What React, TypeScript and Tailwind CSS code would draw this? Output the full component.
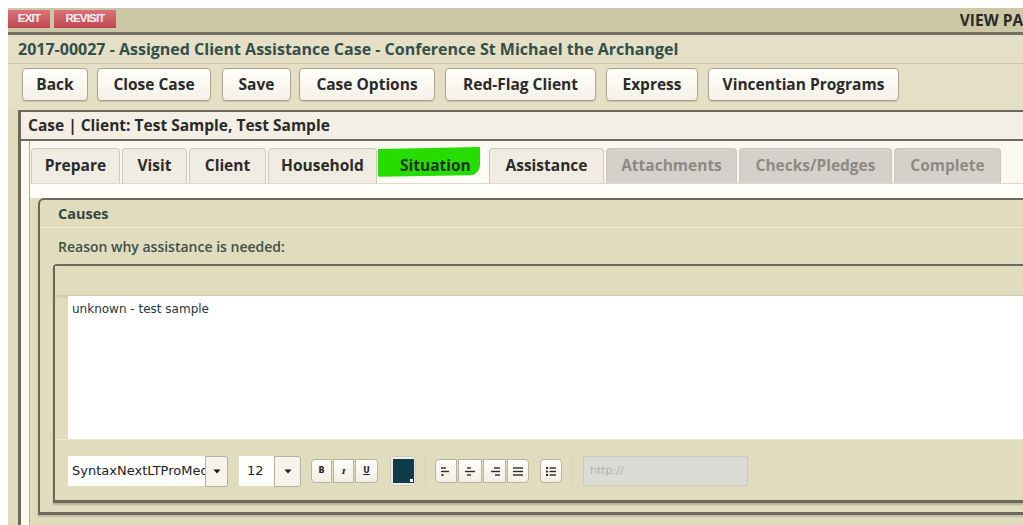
import React from "react";

const UI = "font-['Open_Sans',sans-serif]";

function ActionButton({ label, w }: { label: string; w: string }) {
  return (
    <div
      className={`${w} h-[33px] flex items-center justify-center rounded-[4px] border border-[#a9a48f] bg-gradient-to-b from-[#fffefb] to-[#f4f1e7] shadow-[0_1px_1px_rgba(0,0,0,0.15)] text-[15.5px] font-bold text-[#2a2a2a] shrink-0`}
    >
      {label}
    </div>
  );
}

function Tab({ label, w, state }: { label: string; w: string; state: "on" | "disabled" | "active" }) {
  if (state === "active") {
    return (
      <div className={`${w} h-[35px] relative shrink-0 bg-[#fffdf6]`}>
        <div className="absolute left-[-1px] top-[0px] w-[102px] h-[28px] bg-[#27dd00] rounded-br-[10px] rounded-bl-[2px] skew-y-[-1deg]" />
        <div className="relative h-full flex items-center pl-[21px] text-[15.5px] font-bold text-[#1e3416]">{label}</div>
      </div>
    );
  }
  const cls =
    state === "disabled"
      ? "bg-[#d4d1ca] border-[#c9c6bd] text-[#8d8a83]"
      : "bg-[#f0ece1] border-[#cfcabb] text-[#2b2b2b]";
  return (
    <div
      className={`${w} h-[35px] shrink-0 flex items-center justify-center rounded-t-[4px] border border-b-0 ${cls} text-[15.5px] font-bold`}
    >
      {label}
    </div>
  );
}

function Caret() {
  return (
    <svg width="8" height="5" viewBox="0 0 8 5">
      <path d="M0.5 0.5 L7.5 0.5 L4 4.5 Z" fill="#1a1a1a" />
    </svg>
  );
}

function SmallBtn({ children, w = "w-[21px]", cls = "" }: { children: React.ReactNode; w?: string; cls?: string }) {
  return (
    <div
      className={`${w} h-[24px] flex items-center justify-center bg-gradient-to-b from-[#fffefa] to-[#f1eee4] border border-[#b9b4a2] ${cls}`}
    >
      {children}
    </div>
  );
}

function Lines({ kind }: { kind: "left" | "center" | "right" | "justify" }) {
  const rows: [number, number][] =
    kind === "left"
      ? [[1, 6], [1, 9], [1, 4]]
      : kind === "center"
      ? [[3, 7], [1, 11], [3, 7]]
      : kind === "right"
      ? [[5, 11], [2, 11], [6, 11]]
      : [[1, 11], [1, 11], [1, 11]];
  return (
    <svg width="12" height="11" viewBox="0 0 12 11">
      {rows.map(([a, b], i) => (
        <line key={i} x1={a} x2={b} y1={2 + i * 3.5} y2={2 + i * 3.5} stroke="#2a2a2a" strokeWidth="1.4" />
      ))}
    </svg>
  );
}

export default function App() {
  return (
    <div className={`w-[1023px] h-[525px] overflow-hidden bg-white pl-[8px] pt-[8px] ${UI}`}>
      <div className="w-[1045px] h-[540px] bg-[#e2dcbe] flex flex-col">
        {/* top menu strip */}
        <div className="h-[27px] shrink-0 bg-[#ccc7a4] border-b-[3px] border-[#736f61] flex items-start pt-[2px] pr-[10px]">
          <div className="h-[18px] w-[42px] flex items-center justify-center bg-gradient-to-b from-[#d9727a] to-[#bf4650] text-[#fff4f4] text-[11.5px] font-bold tracking-[-0.8px] font-['Liberation_Sans_Narrow','Liberation_Sans',sans-serif]">
            EXIT
          </div>
          <div className="ml-[4px] h-[18px] w-[62px] flex items-center justify-center bg-gradient-to-b from-[#d9727a] to-[#bf4650] text-[#fff4f4] text-[11.5px] font-bold tracking-[-0.8px] font-['Liberation_Sans_Narrow','Liberation_Sans',sans-serif]">
            REVISIT
          </div>
          <div className="flex-1" />
          <div className="text-[15.5px] font-bold text-[#2a2a2a] leading-[20px] mt-[0px]">VIEW PAGE</div>
        </div>

        {/* case title */}
        <div className="h-[29px] shrink-0 bg-[#e5dfc5] border-b border-[#cfc8ab] flex items-center pl-[10px] text-[16px] font-bold text-[#31504b] whitespace-nowrap">
          2017-00027 - Assigned Client Assistance Case - Conference St Michael the Archangel
        </div>

        {/* action buttons */}
        <div className="h-[46px] shrink-0 bg-[#e5dfc5] flex items-start pt-[4px] pl-[14px]">
          <ActionButton label="Back" w="w-[66px]" />
          <div className="w-[9px]" />
          <ActionButton label="Close Case" w="w-[114px]" />
          <div className="w-[11px]" />
          <ActionButton label="Save" w="w-[69px]" />
          <div className="w-[8px]" />
          <ActionButton label="Case Options" w="w-[136px]" />
          <div className="w-[10px]" />
          <ActionButton label="Red-Flag Client" w="w-[151px]" />
          <div className="w-[10px]" />
          <ActionButton label="Express" w="w-[92px]" />
          <div className="w-[10px]" />
          <ActionButton label="Vincentian Programs" w="w-[191px]" />
        </div>

        {/* case panel */}
        <div className="ml-[10px] flex-1 border-l-[3px] border-t-[2px] border-[#6c685b] flex flex-col">
          <div className="h-[29px] shrink-0 bg-[#f3efe4] border-b-[2px] border-[#6c685b] flex items-center pl-[7px] text-[15.5px] font-bold text-[#2a2a2a]">
            Case | Client: Test Sample, Test Sample
          </div>
          <div className="flex-1 bg-[#fbf8ef] pl-[8px]">
            <div className="h-full border-l border-[#b3ae9b] flex flex-col">
              {/* tabs */}
              <div className="pt-[7px] pl-[1px] flex gap-[2px] border-b border-[#ddd8c8] bg-[#fbf8ef]">
                <Tab label="Prepare" w="w-[89px]" state="on" />
                <Tab label="Visit" w="w-[65px]" state="on" />
                <Tab label="Client" w="w-[77px]" state="on" />
                <Tab label="Household" w="w-[109px]" state="on" />
                <Tab label="Situation" w="w-[108px]" state="active" />
                <Tab label="Assistance" w="w-[115px]" state="on" />
                <Tab label="Attachments" w="w-[131px]" state="disabled" />
                <Tab label="Checks/Pledges" w="w-[153px]" state="disabled" />
                <Tab label="Complete" w="w-[107px]" state="disabled" />
              </div>
              <div className="h-[14px] bg-[#fffdf7]" />

              {/* situation content */}
              <div className="flex-1 bg-[#e2dcbe] pl-[8px]">
                <div className="border-l-[2px] border-t-[2px] border-b-[3px] border-[#6c685b] rounded-tl-[6px] bg-[#e2dcbe] shadow-[0_2px_2px_rgba(0,0,0,0.15)]">
                  <div className="h-[28px] border-b border-[#f1ebd3] flex items-center pl-[18px] text-[14.5px] font-bold text-[#2f4845]">
                    Causes
                  </div>
                  <div className="h-[36px] flex items-center pl-[18px] text-[14px] font-semibold text-[#3d504c]">
                    Reason why assistance is needed:
                  </div>
                  <div className="ml-[13px] border-l-[2px] border-t-[2px] border-b-[3px] border-[#6c685b] rounded-tl-[4px] shadow-[0_2px_2px_rgba(0,0,0,0.2)] mb-[9px]">
                    <div className="h-[30px] bg-[#e2dcbe] border-b border-[#cfc9ad] shadow-[0_1px_2px_rgba(0,0,0,0.12)]" />
                    <div className="ml-[13px] h-[143px] bg-white pl-[4px] pt-[4px] font-['DejaVu_Sans',sans-serif] text-[12px] text-[#1f3545]">
                      unknown - test sample
                    </div>
                    {/* editor toolbar */}
                    <div className="h-[61px] flex items-start pt-[16px] pl-[13px] border-t border-[#ece6cf]">
                      <div className="w-[137px] h-[30px] bg-white flex items-center pl-[4px] overflow-hidden whitespace-nowrap font-['DejaVu_Sans',sans-serif] text-[13px] text-[#222]">
                        SyntaxNextLTProMedium
                      </div>
                      <div className="w-[23px] h-[31px] flex items-center justify-center bg-[#f7f4eb] border border-[#b6b19f] rounded-r-[3px]">
                        <Caret />
                      </div>
                      <div className="w-[11px]" />
                      <div className="w-[35px] h-[30px] bg-white flex items-center pl-[8px] font-['DejaVu_Sans',sans-serif] text-[13px] text-[#222]">
                        12
                      </div>
                      <div className="w-[27px] h-[31px] flex items-center justify-center bg-[#f7f4eb] border border-[#b6b19f] rounded-r-[3px]">
                        <Caret />
                      </div>
                      <div className="w-[10px]" />
                      <div className="flex gap-[1px] mt-[3px]">
                        <SmallBtn cls="rounded-l-[4px]">
                          <span className="text-[8px] font-bold text-[#222] font-['DejaVu_Sans',sans-serif]">B</span>
                        </SmallBtn>
                        <SmallBtn>
                          <span className="text-[8px] italic font-bold text-[#222] font-['DejaVu_Serif',serif]">I</span>
                        </SmallBtn>
                        <SmallBtn w="w-[23px]" cls="rounded-r-[4px]">
                          <span className="text-[8px] font-bold underline text-[#222] font-['DejaVu_Sans',sans-serif]">U</span>
                        </SmallBtn>
                      </div>
                      <div className="w-[12px]" />
                      <div className="w-[26px] h-[30px] flex items-center justify-center bg-[#efebe0] border border-[#d0cbb9] rounded-[3px]">
                        <div className="w-[21px] h-[24px] bg-[#0d3b47] relative">
                          <div className="absolute right-[1px] bottom-[1px] w-[3px] h-[3px] bg-white" />
                        </div>
                      </div>
                      <div className="w-[1px] h-[28px] bg-[#d6d0b6] mx-[9px]" />
                      <div className="flex gap-[1px] mt-[3px]">
                        <SmallBtn w="w-[22px]" cls="rounded-l-[4px]"><Lines kind="left" /></SmallBtn>
                        <SmallBtn w="w-[24px]"><Lines kind="center" /></SmallBtn>
                        <SmallBtn w="w-[23px]"><Lines kind="right" /></SmallBtn>
                        <SmallBtn w="w-[22px]" cls="rounded-r-[4px]"><Lines kind="justify" /></SmallBtn>
                      </div>
                      <div className="w-[11px]" />
                      <div className="mt-[3px]">
                        <SmallBtn w="w-[22px]" cls="rounded-[4px]">
                          <svg width="12" height="11" viewBox="0 0 12 11">
                            {[2, 5.5, 9].map((y) => (
                              <g key={y}>
                                <rect x="1" y={y - 1} width="2" height="2" fill="#2a2a2a" />
                                <line x1="4.5" x2="11" y1={y} y2={y} stroke="#2a2a2a" strokeWidth="1.4" />
                              </g>
                            ))}
                          </svg>
                        </SmallBtn>
                      </div>
                      <div className="w-[1px] h-[28px] bg-[#d6d0b6] mx-[10px]" />
                      <div className="w-[165px] h-[30px] bg-[#dcdbd7] border border-[#cbc9c1] flex items-center pl-[6px] font-['DejaVu_Sans',sans-serif] text-[11px] text-[#b0aea8]">
                        http://
                      </div>
                    </div>
                  </div>
                </div>
              </div>
            </div>
          </div>
        </div>
      </div>
    </div>
  );
}
